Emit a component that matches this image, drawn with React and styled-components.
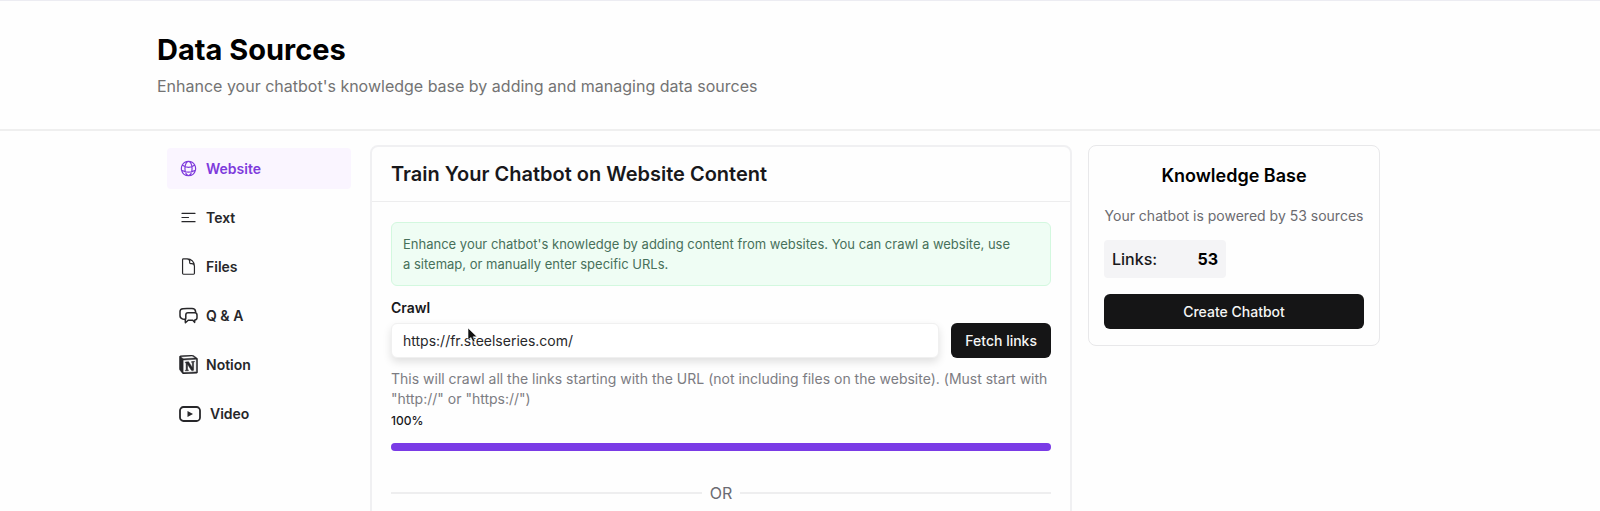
import styled, { createGlobalStyle } from "styled-components";
import { HiOutlineGlobeAlt, HiBars3CenterLeft, HiOutlineDocument } from "react-icons/hi2";
import { SiNotion } from "react-icons/si";

const ChatIcon = () => (
  <svg width="19" height="18" viewBox="0 0 19 18" fill="none" stroke="currentColor" strokeWidth="1.5" strokeLinejoin="round" strokeLinecap="round">
    <path d="M6.500 12.200H5.200L3.600 11.900C1.900 11.500 1 10.400 1 8.800V4.600C1 2.800 2.200 1.800 4 1.700L8 1.500H13C15 1.500 16.400 2.500 16.600 4.600V5.200" />
    <path d="M9 5.700H15.600C17.200 5.700 18 6.500 18 7.900V10.700C18 12.100 17.200 12.800 15.800 13L15.600 15.400 13.800 13.200H9.200L6.400 15.800 6.200 12.600 6.800 11.500V7.900C6.800 6.500 7.500 5.700 9 5.700Z" />
  </svg>
);

const VideoIcon = () => (
  <svg width="23" height="16" viewBox="0 0 23 16" fill="none">
    <rect x="1" y="1" width="20" height="14" rx="3.500" stroke="currentColor" strokeWidth="1.800" />
    <path d="M8.500 5L14 8 8.500 11Z" fill="currentColor" />
  </svg>
);

const sources = [
  { name: "Website", icon: <HiOutlineGlobeAlt size={19} />, active: true },
  { name: "Text", icon: <HiBars3CenterLeft size={19} /> },
  { name: "Files", icon: <HiOutlineDocument size={19} /> },
  { name: "Q & A", icon: <ChatIcon /> },
  { name: "Notion", icon: <SiNotion size={19} stroke="currentColor" strokeWidth={0.6} /> },
  { name: "Video", icon: <VideoIcon /> },
];

const App = () => {
  const progress = 100;

  return (
    <>
      <GlobalStyle />
      <Header>
        <Inner>
          <PageTitle>Data Sources</PageTitle>
          <PageText>Enhance your chatbot's knowledge base by adding and managing data sources</PageText>
        </Inner>
      </Header>

      <Inner>
        <Columns>
          <SideNav>
            {sources.map((source) => (
              <NavItem href="#" key={source.name} $active={source.active}>
                {source.icon}
                {source.name}
              </NavItem>
            ))}
          </SideNav>

          <Card>
            <CardHeader>
              <CardTitle>Train Your Chatbot on Website Content</CardTitle>
            </CardHeader>
            <CardBody>
              <Notice>
                Enhance your chatbot's knowledge by adding content from websites. You can crawl a website, use
                <br />a sitemap, or manually enter specific URLs.
              </Notice>
              <Label htmlFor="crawl">Crawl</Label>
              <CrawlRow>
                <InputWrap>
                  <Input id="crawl" type="text" defaultValue="https://fr.steelseries.com/" />
                  <Cursor width="11" height="17" viewBox="0 0 11 17">
                    <path d="M1 1V13L4 10.500 6 15 8 14 6 9.800H10Z" fill="#111" stroke="#fff" strokeWidth="0.600" />
                  </Cursor>
                </InputWrap>
                <Button>Fetch links</Button>
              </CrawlRow>
              <Hint>
                This will crawl all the links starting with the URL (not including files on the website). (Must start
                with "http://" or "https://")
              </Hint>
              <Percent>{progress}%</Percent>
              <Track>
                <Bar style={{ width: `${progress}%` }} />
              </Track>
              <Divider>OR</Divider>
            </CardBody>
          </Card>

          <Summary>
            <SummaryTitle>Knowledge Base</SummaryTitle>
            <SummaryText>Your chatbot is powered by 53 sources</SummaryText>
            <Count>
              <span>Links:</span>
              <strong>53</strong>
            </Count>
            <Button>Create Chatbot</Button>
          </Summary>
        </Columns>
      </Inner>
    </>
  );
};

export default App;

const GlobalStyle = createGlobalStyle`
  * {
    box-sizing: border-box;
  }

  body {
    margin: 0;
    background: #fefefe;
    color: #18181b;
    font-family: Inter, "Liberation Sans", sans-serif;
    font-size: 14px;
    line-height: 20px;
  }

  h1, h2, p {
    margin: 0;
  }
`;

const Header = styled.header`
  padding: 31px 0;
  border-top: 1px solid #ececf2;
  border-bottom: 2px solid #efefef;
`;

const Inner = styled.div`
  max-width: 1350px;
  margin: 0 auto;
  padding: 0 95px 0 32px;
`;

const PageTitle = styled.h1`
  font-size: 29px;
  font-weight: 700;
  line-height: 36px;
  color: #000;
`;

const PageText = styled.p`
  margin-top: 6px;
  font-size: 16px;
  line-height: 24px;
  color: #737373;
`;

const Columns = styled.div`
  display: flex;
  align-items: flex-start;
  gap: 16px;
  padding-top: 14px;
`;

const SideNav = styled.nav`
  display: flex;
  flex-direction: column;
  gap: 8px;
  width: 197px;
  padding: 3px 3px 0 10px;
`;

const NavItem = styled.a`
  display: flex;
  align-items: center;
  gap: 8px;
  height: 41px;
  padding: 0 12px;
  border-radius: 4px;
  font-weight: 600;
  text-decoration: none;
  color: ${({ $active }) => ($active ? "#7e3bdc" : "#27272a")};
  background: ${({ $active }) => ($active ? "#faf5ff" : "transparent")};
`;

const Card = styled.main`
  flex: 1;
  border: 2px solid #f0f0f2;
  border-radius: 8px;
`;

const CardHeader = styled.div`
  padding: 13px 19px;
  border-bottom: 1px solid #ededee;
`;

const CardTitle = styled.h2`
  font-size: 20px;
  font-weight: 600;
  line-height: 28px;
`;

const CardBody = styled.div`
  padding: 20px 19px 0;
`;

const Notice = styled.p`
  padding: 11px;
  border: 1px solid #d3f8df;
  border-radius: 6px;
  background: #effdf4;
  color: #47705a;
  font-size: 13px;
`;

const Label = styled.label`
  display: block;
  margin: 12px 0 5px;
  font-weight: 600;
`;

const CrawlRow = styled.div`
  display: flex;
  gap: 12px;
`;

const InputWrap = styled.div`
  position: relative;
  flex: 1;
`;

const Input = styled.input`
  display: block;
  width: 100%;
  height: 35px;
  padding: 0 11px;
  border: 1px solid #f0f0f0;
  border-radius: 6px;
  background: #fff;
  box-shadow: 0 4px 8px rgba(0, 0, 0, 0.12);
  color: #27272a;
  font: inherit;
`;

const Cursor = styled.svg`
  position: absolute;
  top: 4px;
  left: 76px;
`;

const Button = styled.button`
  height: 35px;
  padding: 0 14px;
  border: 0;
  border-radius: 6px;
  background: #151516;
  color: #f5f5f5;
  font: inherit;
  font-weight: 500;
`;

const Hint = styled.p`
  margin-top: 11px;
  color: #7c7c82;
`;

const Percent = styled.p`
  margin: 2px 0 12px;
  font-size: 12px;
  font-weight: 500;
`;

const Track = styled.div`
  height: 8px;
  border-radius: 4px;
  background: #ede9fe;
`;

const Bar = styled.div`
  height: 100%;
  border-radius: 4px;
  background: #7a3be6;
`;

const Divider = styled.div`
  display: flex;
  align-items: center;
  gap: 8px;
  padding: 30px 0 20px;
  font-size: 16px;
  line-height: 24px;
  color: #6b6b72;

  &::before,
  &::after {
    content: "";
    flex: 1;
    height: 2px;
    background: #eeeeef;
  }
`;

const Summary = styled.aside`
  display: flex;
  flex-direction: column;
  width: 292px;
  padding: 16px 15px;
  border: 1px solid #e8e8ea;
  border-radius: 8px;
`;

const SummaryTitle = styled.h2`
  font-size: 18px;
  font-weight: 600;
  line-height: 28px;
  text-align: center;
  color: #000;
`;

const SummaryText = styled.p`
  margin: 16px 0 14px;
  text-align: center;
  color: #6b6b70;
`;

const Count = styled.div`
  display: flex;
  align-items: center;
  justify-content: space-between;
  width: 122px;
  height: 38px;
  margin-bottom: 16px;
  padding: 0 8px;
  border-radius: 4px;
  background: #f4f4f6;
  font-size: 16px;
  font-weight: 500;

  strong {
    font-weight: 700;
    color: #000;
  }
`;
